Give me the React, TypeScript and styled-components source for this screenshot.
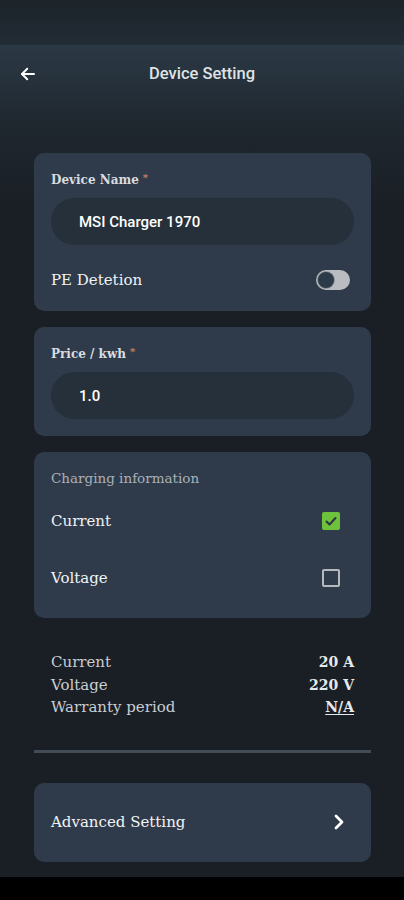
import React, { useState } from 'react';
import styled, { createGlobalStyle } from 'styled-components';

const GlobalStyle = createGlobalStyle`
  html, body {
    margin: 0;
    padding: 0;
    background: #000000;
  }
  * {
    box-sizing: border-box;
  }
`;

const serif = `'DejaVu Serif', 'Liberation Serif', serif`;
const sans = `Roboto, 'Liberation Sans', sans-serif`;

const Screen = styled.div`
  width: 404px;
  height: 900px;
  display: flex;
  flex-direction: column;
  background: #000000;
  overflow: hidden;
`;

const StatusBar = styled.div`
  height: 45px;
  flex-shrink: 0;
  background: linear-gradient(180deg, #1c2329 0%, #222c35 100%);
`;

const Main = styled.div`
  height: 832px;
  flex-shrink: 0;
  display: flex;
  flex-direction: column;
  background: linear-gradient(180deg, #2b3945 0px, #1f272f 80px, #1a1f25 160px, #1a1f25 100%);
`;

const Header = styled.div`
  height: 56px;
  flex-shrink: 0;
  display: flex;
  align-items: center;
  justify-content: center;
  position: relative;
`;

const BackButton = styled.button`
  position: absolute;
  left: 18px;
  top: 19px;
  width: 20px;
  height: 20px;
  padding: 0;
  border: none;
  background: none;
  display: flex;
  align-items: center;
  justify-content: center;
`;

const Title = styled.div`
  font-family: ${sans};
  font-size: 16.5px;
  font-weight: 500;
  color: #dfe3e6;
`;

const Content = styled.div`
  display: flex;
  flex-direction: column;
  padding: 52px 33px 0 34px;
`;

const Card = styled.div<{ $pad?: string }>`
  background: #2f3b4a;
  border-radius: 10px;
  display: flex;
  flex-direction: column;
  padding: ${(p) => p.$pad || '17px'};
  margin-bottom: 16px;
`;

const FieldLabel = styled.div`
  font-family: ${serif};
  font-size: 12px;
  font-weight: bold;
  color: #d9dde0;
  height: 20px;
  line-height: 20px;
  margin-bottom: 8px;

  span {
    color: #d9805e;
    font-size: 10px;
    margin-left: 4px;
    vertical-align: top;
    position: relative;
    top: -2px;
  }
`;

const TextInput = styled.div`
  height: 47px;
  border-radius: 24px;
  background: #25303b;
  display: flex;
  align-items: center;
  padding-left: 28px;
  font-family: ${sans};
  font-size: 15px;
  font-weight: 500;
  color: #ffffff;
`;

const Row = styled.div<{ $h: number; $mt?: number }>`
  height: ${(p) => p.$h}px;
  margin-top: ${(p) => p.$mt || 0}px;
  display: flex;
  align-items: center;
  justify-content: space-between;
`;

const RowLabel = styled.div`
  font-family: ${serif};
  font-size: 15px;
  color: #f1f3f5;
`;

const SectionTitle = styled.div`
  font-family: ${serif};
  font-size: 13.5px;
  color: #a9b1b9;
  height: 20px;
  line-height: 20px;
`;

const Track = styled.div<{ $on: boolean }>`
  width: 34px;
  height: 20px;
  border-radius: 10px;
  background: ${(p) => (p.$on ? '#6cbf3d' : '#b9bdc1')};
  position: relative;
  margin-right: 4px;
  cursor: pointer;
`;

const Thumb = styled.div<{ $on: boolean }>`
  position: absolute;
  top: 2px;
  left: ${(p) => (p.$on ? '16px' : '2px')};
  width: 16px;
  height: 16px;
  border-radius: 50%;
  background: #2d3a47;
  box-shadow: 0 0 0 1px #8a9299;
`;

const Check = styled.div<{ $on: boolean }>`
  width: 18px;
  height: 18px;
  border-radius: 2px;
  margin-right: 14px;
  display: flex;
  align-items: center;
  justify-content: center;
  background: ${(p) => (p.$on ? '#6dc13b' : 'transparent')};
  border: ${(p) => (p.$on ? 'none' : '2px solid #b4b9be')};
  cursor: pointer;
`;

const InfoList = styled.div`
  display: flex;
  flex-direction: column;
  padding: 17px 17px 0 17px;
`;

const InfoRow = styled.div`
  height: 22.5px;
  display: flex;
  align-items: center;
  justify-content: space-between;
  font-family: ${serif};
  font-size: 15px;
  color: #c9ced3;
`;

const InfoValue = styled.div<{ $link?: boolean }>`
  font-size: 14px;
  font-weight: bold;
  color: #e6e9ec;
  text-decoration: ${(p) => (p.$link ? 'underline' : 'none')};
  text-underline-offset: 2px;
`;

const Divider = styled.div`
  height: 3px;
  background: #434c56;
  margin: 31px 0 30px 0;
`;

const LinkCard = styled(Card)`
  height: 79px;
  margin-bottom: 0;
  flex-direction: row;
  align-items: center;
  justify-content: space-between;
  padding: 0 25px 0 17px;
`;

const ArrowLeft = () => (
  <svg width="18" height="18" viewBox="0 0 24 24" fill="none" stroke="#ffffff" strokeWidth="2.6" strokeLinecap="round" strokeLinejoin="round">
    <path d="M20 12H4" />
    <path d="M11 5l-7 7 7 7" />
  </svg>
);

const Chevron = () => (
  <svg width="14" height="16" viewBox="0 0 14 16" fill="none" stroke="#ffffff" strokeWidth="2.8" strokeLinecap="round" strokeLinejoin="round">
    <path d="M4 2l6 6-6 6" />
  </svg>
);

const Tick = () => (
  <svg width="14" height="14" viewBox="0 0 14 14" fill="none" stroke="#2c3640" strokeWidth="2" strokeLinecap="round" strokeLinejoin="round">
    <path d="M2.5 7.5l3 3 6-6.5" />
  </svg>
);

const App = (): React.ReactElement => {
  const [pe, setPe] = useState(false);
  const [current, setCurrent] = useState(true);
  const [voltage, setVoltage] = useState(false);

  return (
    <Screen>
      <GlobalStyle />
      <StatusBar />
      <Main>
        <Header>
          <BackButton>
            <ArrowLeft />
          </BackButton>
          <Title>Device Setting</Title>
        </Header>
        <Content>
          <Card $pad="17px 17px 4px 17px">
            <FieldLabel>
              Device Name<span>*</span>
            </FieldLabel>
            <TextInput>MSI Charger 1970</TextInput>
            <Row $h={54} $mt={8}>
              <RowLabel>PE Detetion</RowLabel>
              <Track $on={pe} onClick={() => setPe(!pe)}>
                <Thumb $on={pe} />
              </Track>
            </Row>
          </Card>
          <Card $pad="17px 17px 17px 17px">
            <FieldLabel>
              Price / kwh<span>*</span>
            </FieldLabel>
            <TextInput>1.0</TextInput>
          </Card>
          <Card $pad="16px 17px 9px 17px">
            <SectionTitle>Charging information</SectionTitle>
            <Row $h={52} $mt={7}>
              <RowLabel>Current</RowLabel>
              <Check $on={current} onClick={() => setCurrent(!current)}>
                {current && <Tick />}
              </Check>
            </Row>
            <Row $h={62}>
              <RowLabel>Voltage</RowLabel>
              <Check $on={voltage} onClick={() => setVoltage(!voltage)}>
                {voltage && <Tick />}
              </Check>
            </Row>
          </Card>
          <InfoList>
            <InfoRow>
              <span>Current</span>
              <InfoValue>20 A</InfoValue>
            </InfoRow>
            <InfoRow>
              <span>Voltage</span>
              <InfoValue>220 V</InfoValue>
            </InfoRow>
            <InfoRow>
              <span>Warranty period</span>
              <InfoValue $link>N/A</InfoValue>
            </InfoRow>
          </InfoList>
          <Divider />
          <LinkCard>
            <RowLabel>Advanced Setting</RowLabel>
            <Chevron />
          </LinkCard>
        </Content>
      </Main>
    </Screen>
  );
};

export default App;
